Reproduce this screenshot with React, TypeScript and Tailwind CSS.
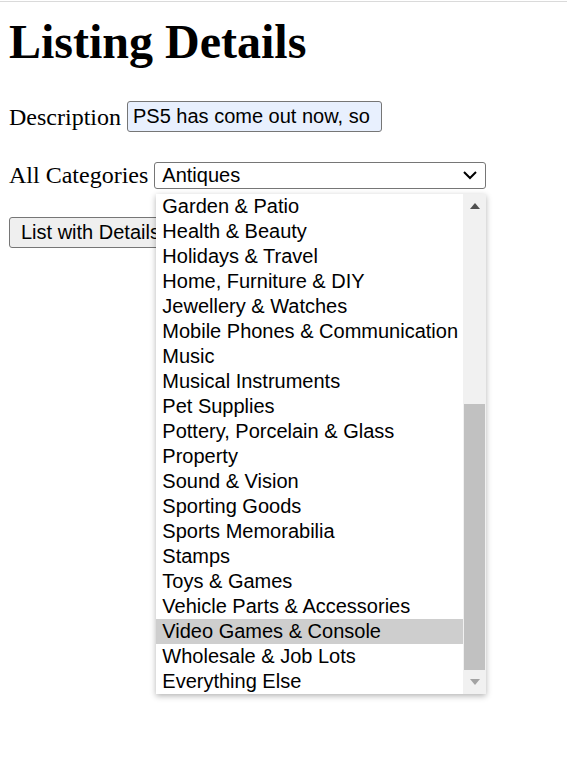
const categories = [
  'Garden & Patio',
  'Health & Beauty',
  'Holidays & Travel',
  'Home, Furniture & DIY',
  'Jewellery & Watches',
  'Mobile Phones & Communication',
  'Music',
  'Musical Instruments',
  'Pet Supplies',
  'Pottery, Porcelain & Glass',
  'Property',
  'Sound & Vision',
  'Sporting Goods',
  'Sports Memorabilia',
  'Stamps',
  'Toys & Games',
  'Vehicle Parts & Accessories',
  'Video Games & Console',
  'Wholesale & Job Lots',
  'Everything Else',
];

const sans = "font-['Liberation_Sans',Arial,sans-serif]";

export default function App() {
  return (
    <div className="min-h-screen bg-white text-black">
      <div className="h-px bg-white" />
      <div className="h-px bg-[#dadada]" />

      <div className="px-[9px] font-['Liberation_Serif','Times_New_Roman',serif]">
        <h1 className="mt-[12px] text-[48px] font-bold leading-[55px]">Listing Details</h1>

        {/* Description */}
        <div className="mt-[32px] flex items-center gap-[6px]">
          <span className="text-[24px] leading-[28px]">Description</span>
          <input
            type="text"
            readOnly
            value="PS5 has come out now, so"
            className={`h-[31px] w-[255px] rounded-[3px] border border-[#767676] bg-[#e8f0fe] px-[5px] text-[20px] outline-none ${sans}`}
          />
        </div>

        {/* Category select with open list */}
        <div className="mt-[29px] flex items-center gap-[6px]">
          <span className="text-[24px] leading-[28px]">All Categories</span>
          <div className="relative">
            <div
              className={`flex h-[27px] w-[332px] items-center justify-between rounded-[3px] border border-[#767676] bg-white pl-[7px] pr-[6px] text-[20px] ${sans}`}
            >
              <span className="leading-[25px]">Antiques</span>
              <svg width="16" height="10" viewBox="0 0 16 10" className="mr-[1px]">
                <path d="M2 2 L8 8 L14 2" fill="none" stroke="#000" strokeWidth="2" />
              </svg>
            </div>

            <div className="absolute left-[2px] top-[32px] z-10 flex w-[330px] bg-white shadow-[0_2px_6px_rgba(0,0,0,0.3)]">
              <ul className={`w-[307px] text-[20px] ${sans}`}>
                {categories.map((c) => (
                  <li
                    key={c}
                    className={`h-[25px] whitespace-nowrap pl-[6px] leading-[25px] ${
                      c === 'Video Games & Console' ? 'bg-[#cecece]' : ''
                    }`}
                  >
                    {c}
                  </li>
                ))}
              </ul>
              <div className="flex w-[23px] flex-col bg-[#f1f1f1]">
                <div className="flex h-[24px] items-center justify-center">
                  <svg width="10" height="6" viewBox="0 0 10 6">
                    <path d="M0 6 L5 0 L10 6 Z" fill="#505050" />
                  </svg>
                </div>
                <div className="h-[186px]" />
                <div className="mx-[1px] h-[266px] bg-[#c1c1c1]" />
                <div className="flex h-[24px] items-center justify-center">
                  <svg width="10" height="6" viewBox="0 0 10 6">
                    <path d="M0 0 L10 0 L5 6 Z" fill="#a3a3a3" />
                  </svg>
                </div>
              </div>
            </div>
          </div>
        </div>

        <button
          type="button"
          className={`mt-[28px] h-[31px] rounded-[3px] border border-[#767676] bg-[#efefef] px-[11px] text-[20px] leading-[25px] ${sans}`}
        >
          List with Details
        </button>
      </div>
    </div>
  );
}
